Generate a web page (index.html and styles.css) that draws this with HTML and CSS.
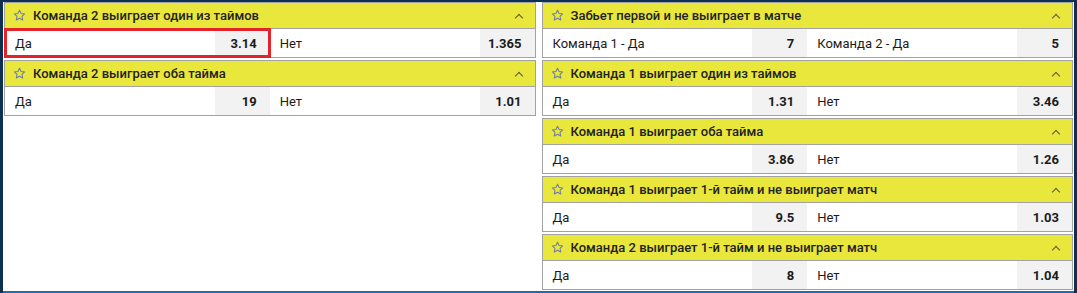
FILE: index.html
```html
<!DOCTYPE html>
<html lang="ru">
<head>
    <meta charset="UTF-8">
    <meta name="viewport" content="width=device-width, initial-scale=1.0">
    <title>Рынки</title>
    <link rel="stylesheet" href="styles.css">
</head>
<body>
<div class="frame">
    <div class="col">
        <section class="market">
            <h3 class="head"><svg class="star" viewBox="0 0 14 14"><path d="M7 1.2l1.7 3.6 3.9.5-2.9 2.7.8 3.9L7 10l-3.5 1.9.8-3.9-2.9-2.7 3.9-.5z"/></svg>Команда 2 выиграет один из таймов<span class="arr"></span></h3>
            <div class="row">
                <div class="cell sel"><span class="lbl">Да</span><b class="odd">3.14</b></div>
                <div class="cell"><span class="lbl">Нет</span><b class="odd">1.365</b></div>
            </div>
        </section>
        <section class="market">
            <h3 class="head"><svg class="star" viewBox="0 0 14 14"><path d="M7 1.2l1.7 3.6 3.9.5-2.9 2.7.8 3.9L7 10l-3.5 1.9.8-3.9-2.9-2.7 3.9-.5z"/></svg>Команда 2 выиграет оба тайма<span class="arr"></span></h3>
            <div class="row">
                <div class="cell"><span class="lbl">Да</span><b class="odd">19</b></div>
                <div class="cell"><span class="lbl">Нет</span><b class="odd">1.01</b></div>
            </div>
        </section>
    </div>

    <div class="col">
        <section class="market">
            <h3 class="head"><svg class="star" viewBox="0 0 14 14"><path d="M7 1.2l1.7 3.6 3.9.5-2.9 2.7.8 3.9L7 10l-3.5 1.9.8-3.9-2.9-2.7 3.9-.5z"/></svg>Забьет первой и не выиграет в матче<span class="arr"></span></h3>
            <div class="row">
                <div class="cell"><span class="lbl">Команда 1 - Да</span><b class="odd">7</b></div>
                <div class="cell"><span class="lbl">Команда 2 - Да</span><b class="odd">5</b></div>
            </div>
        </section>
        <section class="market">
            <h3 class="head"><svg class="star" viewBox="0 0 14 14"><path d="M7 1.2l1.7 3.6 3.9.5-2.9 2.7.8 3.9L7 10l-3.5 1.9.8-3.9-2.9-2.7 3.9-.5z"/></svg>Команда 1 выиграет один из таймов<span class="arr"></span></h3>
            <div class="row">
                <div class="cell"><span class="lbl">Да</span><b class="odd">1.31</b></div>
                <div class="cell"><span class="lbl">Нет</span><b class="odd">3.46</b></div>
            </div>
        </section>
        <section class="market">
            <h3 class="head"><svg class="star" viewBox="0 0 14 14"><path d="M7 1.2l1.7 3.6 3.9.5-2.9 2.7.8 3.9L7 10l-3.5 1.9.8-3.9-2.9-2.7 3.9-.5z"/></svg>Команда 1 выиграет оба тайма<span class="arr"></span></h3>
            <div class="row">
                <div class="cell"><span class="lbl">Да</span><b class="odd">3.86</b></div>
                <div class="cell"><span class="lbl">Нет</span><b class="odd">1.26</b></div>
            </div>
        </section>
        <section class="market">
            <h3 class="head"><svg class="star" viewBox="0 0 14 14"><path d="M7 1.2l1.7 3.6 3.9.5-2.9 2.7.8 3.9L7 10l-3.5 1.9.8-3.9-2.9-2.7 3.9-.5z"/></svg>Команда 1 выиграет 1-й тайм и не выиграет матч<span class="arr"></span></h3>
            <div class="row">
                <div class="cell"><span class="lbl">Да</span><b class="odd">9.5</b></div>
                <div class="cell"><span class="lbl">Нет</span><b class="odd">1.03</b></div>
            </div>
        </section>
        <section class="market">
            <h3 class="head"><svg class="star" viewBox="0 0 14 14"><path d="M7 1.2l1.7 3.6 3.9.5-2.9 2.7.8 3.9L7 10l-3.5 1.9.8-3.9-2.9-2.7 3.9-.5z"/></svg>Команда 2 выиграет 1-й тайм и не выиграет матч<span class="arr"></span></h3>
            <div class="row">
                <div class="cell"><span class="lbl">Да</span><b class="odd">8</b></div>
                <div class="cell"><span class="lbl">Нет</span><b class="odd">1.04</b></div>
            </div>
        </section>
    </div>
</div>
</body>
</html>
```

FILE: styles.css
```css
body {margin: 0; background: #0e3050; font-family: Roboto, "Liberation Sans", sans-serif; font-size: 13px; color: #1b1b1b;}
.frame {display: grid; grid-template-columns: 1fr 1fr; gap: 6px; align-items: start; margin: 2px 3px 0; padding: 0 1px; height: 291px; background: #fff; border-bottom: 2px solid #1b6fb1; box-sizing: border-box;}
.col {display: flex; flex-direction: column; gap: 2px;}

.market {border: 1px solid #a2a2a2;}
.head {display: flex; align-items: center; height: 25px; margin: 0; padding: 0 0 0 8px; background: #eae73c; border-bottom: 1px solid #a2a2a2; font-size: 13px; font-weight: 500; color: #222;}
.star {width: 13px; height: 13px; margin-right: 7px; fill: none; stroke: #6d7e9e; stroke-width: 1.1; stroke-linejoin: round;}
.arr {margin-left: auto; margin-right: 13px; width: 5px; height: 5px; border-left: 1px solid #5a5a3a; border-top: 1px solid #5a5a3a; transform: translateY(2px) rotate(45deg);}

.row {display: grid; grid-template-columns: 1fr 1fr; height: 28px;}
.cell {display: flex; align-items: center;}
.lbl {flex: 1; padding-left: 10px;}
.odd {align-self: stretch; display: flex; align-items: center; justify-content: flex-end; width: 42px; padding-right: 13px; background: #f2f2f2; font-weight: bold;}
.sel {outline: 3px solid #e2232a; outline-offset: -2px;}
```
